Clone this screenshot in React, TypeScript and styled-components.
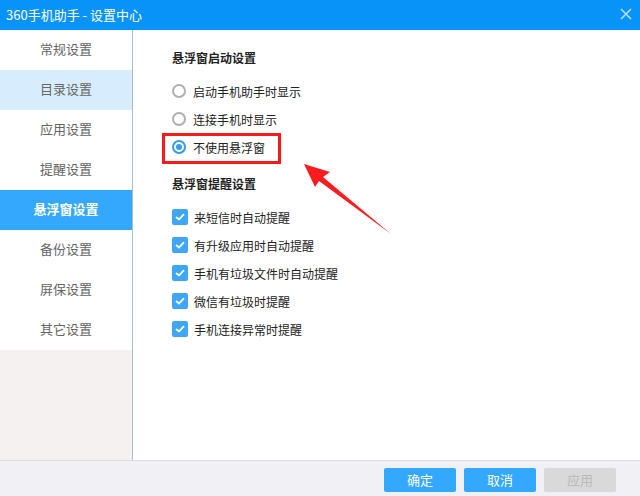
import React, { FC } from 'react';
import styled, { createGlobalStyle } from 'styled-components';

const GlobalStyle = createGlobalStyle`
    html, body {
        margin: 0;
        padding: 0;
        background: #ffffff;
    }
    body {
        font-family: 'Noto Sans CJK SC', 'Noto Sans', sans-serif;
    }
`;

const Window = styled.div`
    width: 640px;
    height: 496px;
    display: flex;
    flex-direction: column;
    background: #ffffff;
    overflow: hidden;
`;

const TitleBar = styled.div`
    height: 30px;
    flex-shrink: 0;
    background: #0893f9;
    display: flex;
    align-items: center;
    justify-content: space-between;
    padding: 0 5px 2px 6px;
    box-sizing: border-box;
    color: #ffffff;
    font-size: 13px;
`;

const CloseButton = styled.div`
    width: 14px;
    height: 14px;
    display: flex;
    align-items: center;
    justify-content: center;
    margin-right: 2px;
`;

const Body = styled.div`
    flex: 1;
    display: flex;
    min-height: 0;
`;

const Sidebar = styled.div`
    width: 132px;
    flex-shrink: 0;
    display: flex;
    flex-direction: column;
    background: #f5f1f0;
    border-right: 1px solid #a7c3d1;
`;

const NavItem = styled.div<{ $state?: 'active' | 'hover' }>`
    height: 40px;
    box-sizing: border-box;
    padding-bottom: 3px;
    display: flex;
    align-items: center;
    justify-content: center;
    font-size: 13px;
    color: ${({ $state }) => ($state === 'active' ? '#ffffff' : '#666666')};
    font-weight: ${({ $state }) => ($state === 'active' ? 600 : 400)};
    background: ${({ $state }) =>
        $state === 'active' ? '#33a8fc' : $state === 'hover' ? '#d7ecfd' : '#ffffff'};
`;

const Content = styled.div`
    flex: 1;
    position: relative;
    padding: 18px 0 0 39px;
`;

const SectionTitle = styled.div`
    height: 20px;
    line-height: 20px;
    font-size: 12px;
    font-weight: 700;
    color: #222222;
    margin-bottom: 9px;
`;

const OptionList = styled.div`
    display: flex;
    flex-direction: column;
    margin-bottom: 13px;
`;

const OptionRow = styled.div`
    height: 28px;
    display: flex;
    align-items: center;
    gap: 7px;
    font-size: 12px;
    color: #222222;
`;

const Radio = styled.span<{ $checked?: boolean }>`
    width: 14px;
    height: 14px;
    box-sizing: border-box;
    border-radius: 50%;
    border: 2px solid ${({ $checked }) => ($checked ? '#2e9df2' : '#b0b0b0')};
    display: flex;
    align-items: center;
    justify-content: center;

    &::after {
        content: '';
        width: 6px;
        height: 6px;
        border-radius: 50%;
        background: ${({ $checked }) => ($checked ? '#2e9df2' : 'transparent')};
    }
`;

const Checkbox = styled.span`
    width: 16px;
    height: 16px;
    border-radius: 2px;
    background: #3fa6f6;
    display: flex;
    align-items: center;
    justify-content: center;
    margin-right: -1px;
`;

const Highlight = styled.div`
    position: absolute;
    left: 29px;
    top: 103px;
    width: 113px;
    height: 25px;
    border: 3px solid #f41b1b;
`;

const Arrow = styled.svg`
    position: absolute;
    left: 167px;
    top: 130px;
`;

const Footer = styled.div`
    height: 33px;
    flex-shrink: 0;
    background: #f0f0f5;
    border-top: 1px solid #dedede;
    display: flex;
    align-items: center;
    justify-content: flex-end;
    gap: 8px;
    padding: 2px 24px 0 0;
`;

const Button = styled.div<{ $disabled?: boolean }>`
    width: 72px;
    height: 24px;
    border-radius: 2px;
    display: flex;
    align-items: center;
    justify-content: center;
    font-size: 13px;
    color: ${({ $disabled }) => ($disabled ? '#b9b9b9' : '#ffffff')};
    background: ${({ $disabled }) => ($disabled ? '#d9d9d9' : '#33a8fc')};
`;

const navItems = ['常规设置', '目录设置', '应用设置', '提醒设置', '悬浮窗设置', '备份设置', '屏保设置', '其它设置'];

const radios = ['启动手机助手时显示', '连接手机时显示', '不使用悬浮窗'];

const checks = ['来短信时自动提醒', '有升级应用时自动提醒', '手机有垃圾文件时自动提醒', '微信有垃圾时提醒', '手机连接异常时提醒'];

const CheckMark: FC = () => (
    <svg width="10" height="8" viewBox="0 0 10 8">
        <path d="M1 4 L4 6.5 L9 1.2" fill="none" stroke="#ffffff" strokeWidth="1.8" />
    </svg>
);

const App: FC = () => {
    return (
        <>
            <GlobalStyle />
            <Window>
                <TitleBar>
                    <span>360手机助手 - 设置中心</span>
                    <CloseButton>
                        <svg width="12" height="12" viewBox="0 0 12 12">
                            <path d="M1 1 L11 11 M11 1 L1 11" stroke="#b5defd" strokeWidth="1.6" />
                        </svg>
                    </CloseButton>
                </TitleBar>
                <Body>
                    <Sidebar>
                        {navItems.map((item, i) => (
                            <NavItem key={item} $state={i === 4 ? 'active' : i === 1 ? 'hover' : undefined}>
                                {item}
                            </NavItem>
                        ))}
                    </Sidebar>
                    <Content>
                        <SectionTitle>悬浮窗启动设置</SectionTitle>
                        <OptionList>
                            {radios.map((r, i) => (
                                <OptionRow key={r}>
                                    <Radio $checked={i === 2} />
                                    {r}
                                </OptionRow>
                            ))}
                        </OptionList>
                        <SectionTitle>悬浮窗提醒设置</SectionTitle>
                        <OptionList>
                            {checks.map((c) => (
                                <OptionRow key={c}>
                                    <Checkbox>
                                        <CheckMark />
                                    </Checkbox>
                                    {c}
                                </OptionRow>
                            ))}
                        </OptionList>
                        <Highlight />
                        <Arrow width="100" height="80" viewBox="0 0 100 80">
                            <polygon
                                points="4,4 30,12 23,17 91,74 19,21 15,27"
                                fill="#fb1d1d"
                            />
                        </Arrow>
                    </Content>
                </Body>
                <Footer>
                    <Button>确定</Button>
                    <Button>取消</Button>
                    <Button $disabled>应用</Button>
                </Footer>
            </Window>
        </>
    );
};

export default App;
